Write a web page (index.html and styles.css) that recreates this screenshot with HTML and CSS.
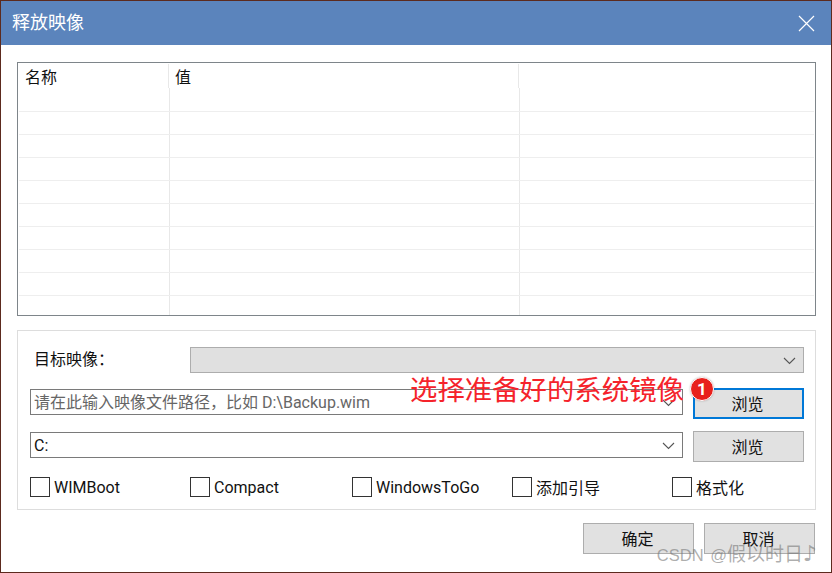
FILE: index.html
```html
<!DOCTYPE html>
<html lang="zh-CN">
<head>
<meta charset="utf-8">
<title>释放映像</title>
<link rel="stylesheet" href="styles.css">
</head>
<body>
<div class="window">
  <header class="titlebar">
    <span class="title">释放映像</span>
    <svg class="close" width="17" height="17" viewBox="0 0 17 17"><path d="M1 1L16 16M16 1L1 16" stroke="#fff" stroke-width="1.2" fill="none"/></svg>
  </header>
  <main class="content">
    <div class="table">
      <div class="row head"><div class="cell c1">名称</div><div class="cell c2">值</div><div class="cell c3"></div></div>
      <div class="row"><div class="cell c1"></div><div class="cell c2"></div><div class="cell c3"></div></div>
      <div class="row"><div class="cell c1"></div><div class="cell c2"></div><div class="cell c3"></div></div>
      <div class="row"><div class="cell c1"></div><div class="cell c2"></div><div class="cell c3"></div></div>
      <div class="row"><div class="cell c1"></div><div class="cell c2"></div><div class="cell c3"></div></div>
      <div class="row"><div class="cell c1"></div><div class="cell c2"></div><div class="cell c3"></div></div>
      <div class="row"><div class="cell c1"></div><div class="cell c2"></div><div class="cell c3"></div></div>
      <div class="row"><div class="cell c1"></div><div class="cell c2"></div><div class="cell c3"></div></div>
      <div class="row"><div class="cell c1"></div><div class="cell c2"></div><div class="cell c3"></div></div>
      <div class="row"><div class="cell c1"></div><div class="cell c2"></div><div class="cell c3"></div></div>
      <div class="row last"><div class="cell c1"></div><div class="cell c2"></div><div class="cell c3"></div></div>
    </div>
    <section class="group">
      <div class="form-row first">
        <span class="label">目标映像：</span>
        <div class="combo disabled">
          <svg class="chev" width="13" height="8" viewBox="0 0 13 8"><path d="M1 1L6.500 6.500L12 1" stroke="#555" stroke-width="1.100" fill="none"/></svg>
        </div>
      </div>
      <div class="form-row second">
        <div class="combo wide placeholder">
          <span>请在此输入映像文件路径，比如 D:\Backup.wim</span>
          <svg class="chev" width="13" height="8" viewBox="0 0 13 8"><path d="M1 1L6.500 6.500L12 1" stroke="#555" stroke-width="1.100" fill="none"/></svg>
        </div>
        <button class="btn focus">浏览</button>
      </div>
      <div class="form-row third">
        <div class="combo wide">
          <span>C:</span>
          <svg class="chev" width="13" height="8" viewBox="0 0 13 8"><path d="M1 1L6.500 6.500L12 1" stroke="#555" stroke-width="1.100" fill="none"/></svg>
        </div>
        <button class="btn">浏览</button>
      </div>
      <div class="checks">
        <label class="check c-a"><span class="box"></span>WIMBoot</label>
        <label class="check c-b"><span class="box"></span>Compact</label>
        <label class="check c-c"><span class="box"></span>WindowsToGo</label>
        <label class="check c-d"><span class="box"></span>添加引导</label>
        <label class="check"><span class="box"></span>格式化</label>
      </div>
    </section>
    <footer class="actions">
      <button class="btn">确定</button>
      <button class="btn">取消</button>
    </footer>
  </main>
  <div class="note">选择准备好的系统镜像</div>
  <div class="badge">1</div>
  <div class="mark">CSDN @<span class="mark-cjk">假以时日</span><span class="mark-note">♪</span></div>
</div>
</body>
</html>
```

FILE: styles.css
```css
* { box-sizing: border-box; }
html, body { margin: 0; padding: 0; background: #fff; }
body {
  width: 832px;
  height: 573px;
  overflow: hidden;
  font-family: Roboto, "Noto Sans CJK SC", sans-serif;
  font-size: 16px;
  color: #111;
}
.window {
  position: relative;
  width: 832px;
  height: 573px;
  border: 1px solid #5c2a1e;
  background: #fff;
  overflow: hidden;
}
.titlebar {
  height: 44px;
  background: #5b84bc;
  display: flex;
  align-items: center;
  justify-content: space-between;
  padding: 0 16px 0 11px;
  color: #fff;
}
.title { font-size: 18px; line-height: 44px; }
.content { padding: 17px 15px 0 16px; }
.table {
  width: 799px;
  height: 254px;
  border: 1px solid #7e858a;
  padding: 1px;
  overflow: hidden;
}
.row { display: flex; height: 23px; border-bottom: 1px solid #eee; }
.row.head { height: 24px; border-bottom: 0; line-height: 28px; }
.row.last { border-bottom: 0; }
.cell { height: 100%; }
.c1 { width: 151px; border-right: 1px solid #e8e8e8; padding-left: 6px; }
.c2 { width: 350px; border-right: 1px solid #e8e8e8; padding-left: 6px; }
.c3 { flex: 1; }
.head .c1 { width: 150px; }
.head + .row { height: 24px; }
.group {
  width: 799px;
  height: 180px;
  margin-top: 14px;
  border: 1px solid #ddd;
  padding: 16px 11px 0 12px;
}
.form-row { display: flex; align-items: flex-start; justify-content: space-between; }
.form-row.second { margin-top: 15px; height: 31px; }
.form-row.third { margin-top: 12px; height: 31px; }
.label { width: 160px; padding-left: 4px; line-height: 26px; }
.combo {
  position: relative;
  display: flex;
  align-items: center;
  height: 26px;
  width: 614px;
  border: 1px solid #7a7a7a;
  padding-left: 3px;
  background: #fff;
}
.combo.wide { width: 653px; margin-top: 1px; }
.combo.disabled { background: #e0e0e0; border-color: #adadad; }
.combo.placeholder { color: #666; padding-bottom: 2px; }
.chev { position: absolute; right: 7px; top: 9px; }
.btn {
  width: 111px;
  height: 31px;
  padding: 0 2px 2px 0;
  border: 1px solid #adadad;
  background: #e1e1e1;
  font: inherit;
  color: #111;
}
.btn.focus { border: 2px solid #0078d7; }
.checks { display: flex; margin-top: 15px; }
.check { display: flex; align-items: center; flex: none; width: 160px; height: 20px; }
.check.c-b { width: 162px; }
.box {
  width: 20px;
  height: 20px;
  border: 1px solid #333;
  margin-right: 4px;
  flex: none;
}
.actions { display: flex; justify-content: flex-end; gap: 10px; margin-top: 13px; width: 798px; }
.note {
  position: absolute;
  left: 409px;
  top: 371px;
  font-size: 27.400px;
  line-height: 38px;
  color: #f5232b;
  white-space: nowrap;
}
.badge {
  position: absolute;
  left: 689px;
  top: 376px;
  width: 24px;
  height: 24px;
  border-radius: 50%;
  background: #e8201c;
  border: 1px solid #fff;
  box-shadow: 0 0 2px rgba(0,0,0,.25);
  color: #fff;
  font-weight: 700;
  font-size: 17px;
  line-height: 22px;
  text-align: center;
}
.mark {
  position: absolute;
  right: 14px;
  top: 543px;
  font-family: "Liberation Sans", "Noto Sans CJK SC", sans-serif;
  font-size: 16.500px;
  line-height: 22px;
  word-spacing: 2px;
  color: rgba(120,120,120,.6);
  white-space: nowrap;
}
.mark-cjk { font-size: 19px; }
.mark-note { font-family: "DejaVu Sans", sans-serif; font-size: 22px; line-height: 20px; }
```
